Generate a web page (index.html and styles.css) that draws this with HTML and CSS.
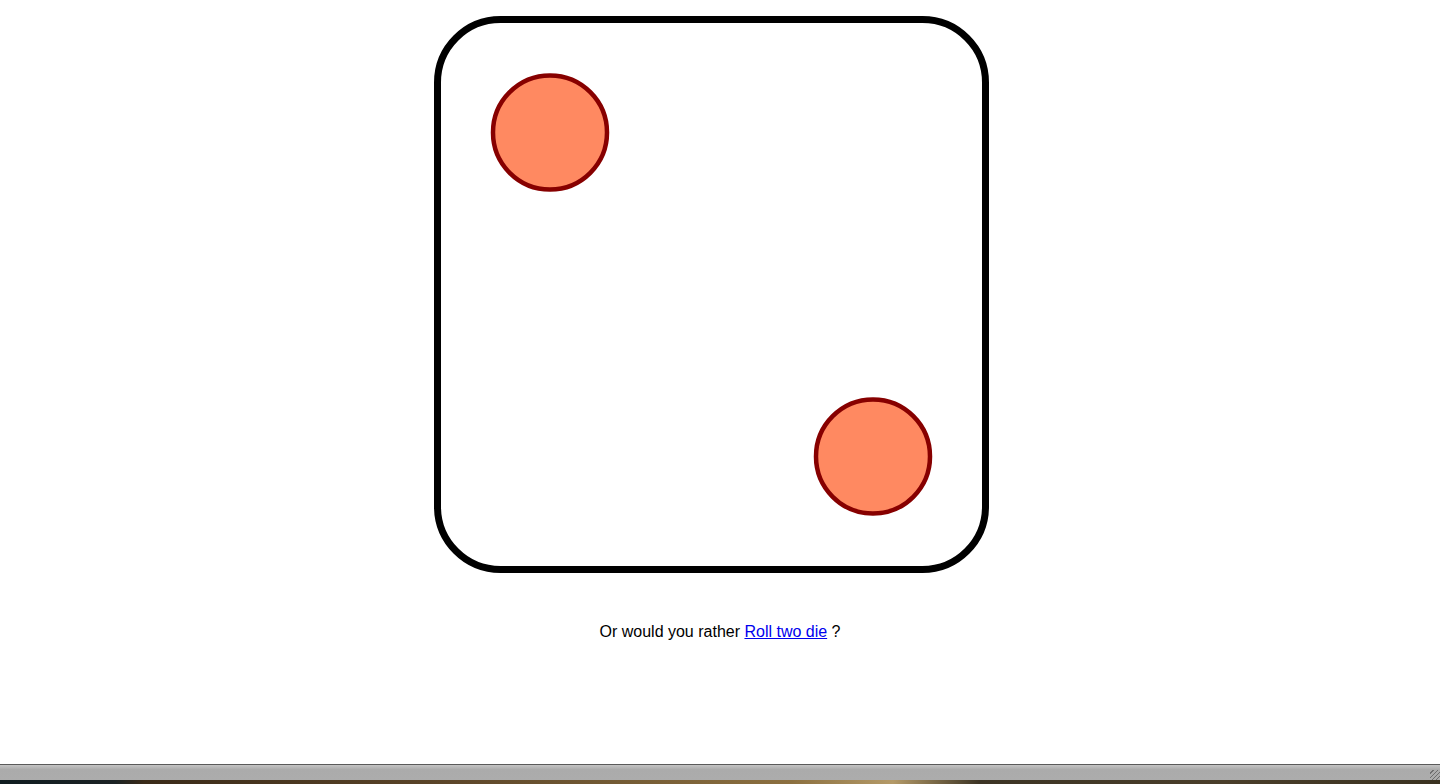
FILE: index.html
```html
<!DOCTYPE html>
<html>
<head>
<meta charset="utf-8">
<link rel="stylesheet" href="styles.css">
</head>
<body>
<div class="page">
  <main class="content">
    <svg class="die" width="600" height="600" viewBox="0 0 600 600">
      <rect x="17.5" y="11.5" width="548" height="550" rx="63" ry="63" fill="#fff" stroke="#000" stroke-width="7"/>
      <circle cx="130" cy="124.5" r="57" fill="#FF8961" stroke="#870000" stroke-width="4.5"/>
      <circle cx="453" cy="448.5" r="57" fill="#FF8961" stroke="#870000" stroke-width="4.5"/>
    </svg>
    <p class="prompt">Or would you rather <a href="#">Roll two die</a> ?</p>
  </main>
  <footer class="statusbar">
    <div class="bar"><span class="grip"></span></div>
    <div class="desktop"></div>
  </footer>
</div>
</body>
</html>
```
FILE: styles.css
```css
html, body {
  margin: 0;
  padding: 0;
  height: 100%;
  background: #fff;
}
.page {
  display: flex;
  flex-direction: column;
  height: 784px;
  overflow: hidden;
}
.content {
  flex: 1;
  display: flex;
  flex-direction: column;
  align-items: center;
  padding-top: 8px;
}
.die {
  display: block;
}
.prompt {
  margin: 15px 0 0;
  font-family: "Liberation Sans", Arial, sans-serif;
  font-size: 16px;
  color: #000;
  text-align: center;
}
.prompt a {
  color: #0000ee;
  text-decoration: underline;
}
.statusbar {
  height: 20px;
  display: flex;
  flex-direction: column;
}
.bar {
  height: 15px;
  border-top: 1px solid #5a5a5a;
  background: linear-gradient(#c4c4c4, #ababab 30%, #acacac);
  position: relative;
}
.grip {
  position: absolute;
  right: 0;
  bottom: 0;
  width: 10px;
  height: 10px;
  background: repeating-linear-gradient(135deg, transparent 0 2px, #6e6e6e 2px 3px);
}
.desktop {
  flex: 1;
  background: linear-gradient(90deg, #0f1c20 0%, #1b2224 8%, #3a2a18 10%, #5a4428 30%, #8c7040 55%, #b49a68 62%, #3c3424 68%, #4a3e2a 85%, #3a3220 100%);
}
```
